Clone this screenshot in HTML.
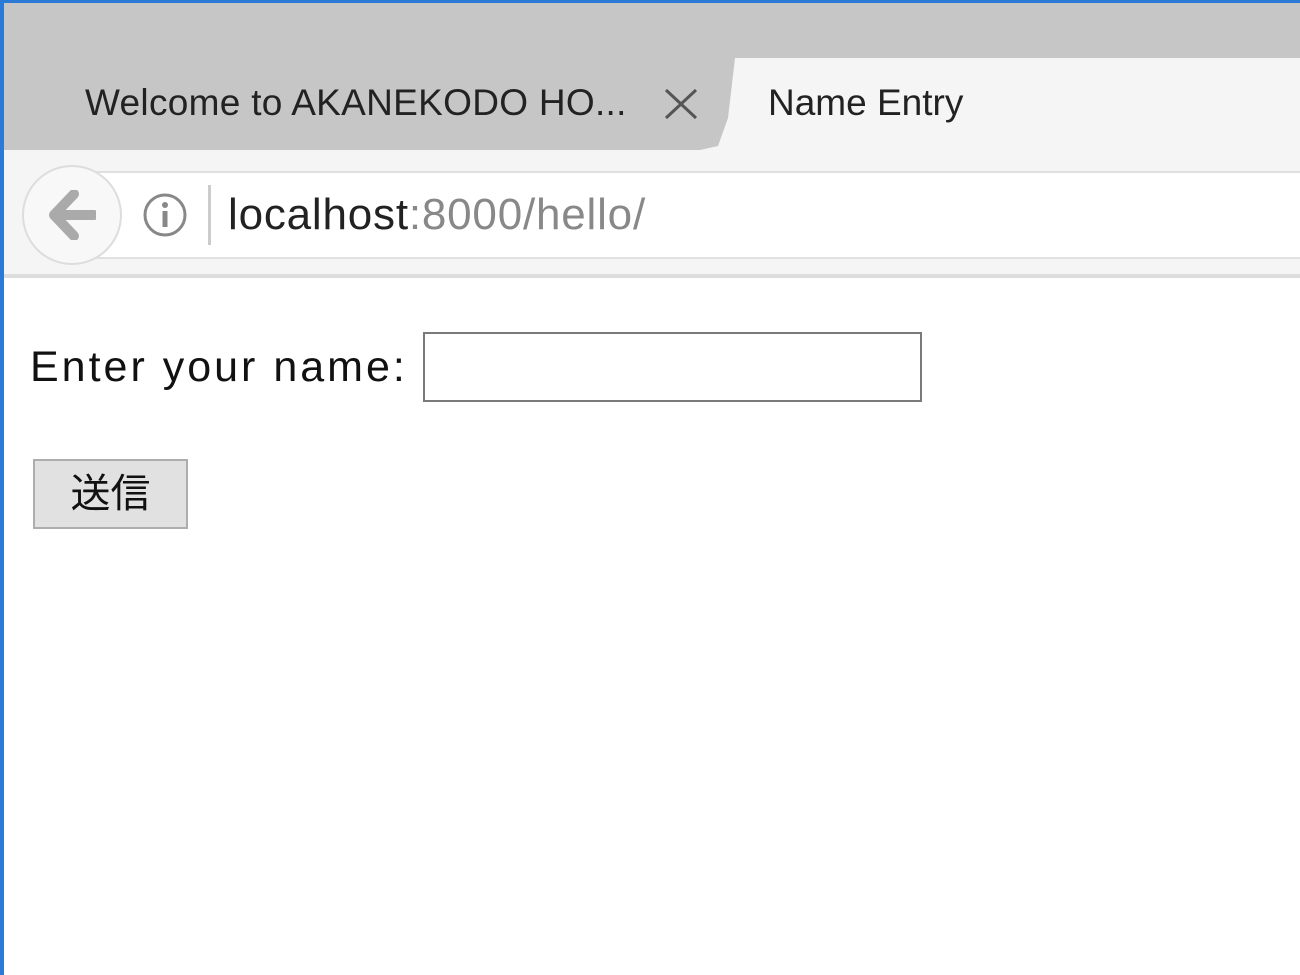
<!DOCTYPE html>
<html><head><meta charset="utf-8"><style>
*{margin:0;padding:0;box-sizing:border-box}
body{width:1300px;height:975px;overflow:hidden;background:#fff;font-family:"Liberation Sans","Noto Sans CJK JP",sans-serif;position:relative}
.abs{position:absolute}
</style></head><body>
<div class="abs" style="left:0;top:0;width:1300px;height:975px;border-left:4px solid #2b7bd6;border-top:3px solid #2b7bd6"></div>
<div class="abs" style="left:4px;top:3px;width:1296px;height:147px;background:#c6c6c6"></div>
<div class="abs" style="left:700px;top:58px;width:600px;height:100px;background:#f5f5f5;border-radius:0;clip-path:polygon(35px 0,100% 0,100% 100%,0 100%,0 92px,18px 88px,28px 60px)"></div>
<div class="abs" style="left:85px;top:82px;font-size:37px;color:#222;letter-spacing:0.3px">Welcome to AKANEKODO HO...</div>
<svg class="abs" style="left:662px;top:86px" width="40" height="36"><path d="M4 4L34 32M34 4L4 32" stroke="#555" stroke-width="3"/></svg>
<div class="abs" style="left:768px;top:82px;font-size:37px;color:#222">Name Entry</div>
<div class="abs" style="left:4px;top:150px;width:1296px;height:125px;background:#f5f5f5"></div>
<div class="abs" style="left:90px;top:171px;width:1220px;height:88px;background:#fff;border:2px solid #e0e0e0;border-left:none"></div>
<div class="abs" style="left:22px;top:165px;width:100px;height:100px;border-radius:50%;background:#f8f8f8;border:2px solid #ddd"></div>
<svg class="abs" style="left:46px;top:190px" width="50" height="50"><path d="M28 4L8 25L28 46M9 25H48" stroke="#aaa" stroke-width="10" fill="none" stroke-linejoin="round" stroke-linecap="round"/></svg>
<svg class="abs" style="left:142px;top:192px" width="46" height="46"><circle cx="23" cy="23" r="20" fill="none" stroke="#888" stroke-width="3"/><circle cx="23" cy="13" r="3" fill="#888"/><rect x="20.5" y="19" width="5" height="16" fill="#888"/></svg>
<div class="abs" style="left:208px;top:185px;width:3px;height:60px;background:#ccc"></div>
<div class="abs" style="left:228px;top:190px;font-size:44px;color:#222;letter-spacing:0.8px">localhost<span style="color:#888">:8000/hello/</span></div>
<div class="abs" style="left:4px;top:274px;width:1296px;height:4px;background:#ddd"></div>
<div class="abs" style="left:30px;top:343px;font-size:43px;color:#111;letter-spacing:3px">Enter your name:</div>
<div class="abs" style="left:423px;top:332px;width:499px;height:70px;border:2px solid #7a7a7a;background:#fff"></div>
<div class="abs" style="left:33px;top:459px;width:155px;height:70px;border:2px solid #adadad;background:#e1e1e1;font-size:40px;color:#111;text-align:center;line-height:66px">送信</div>
</body></html>
